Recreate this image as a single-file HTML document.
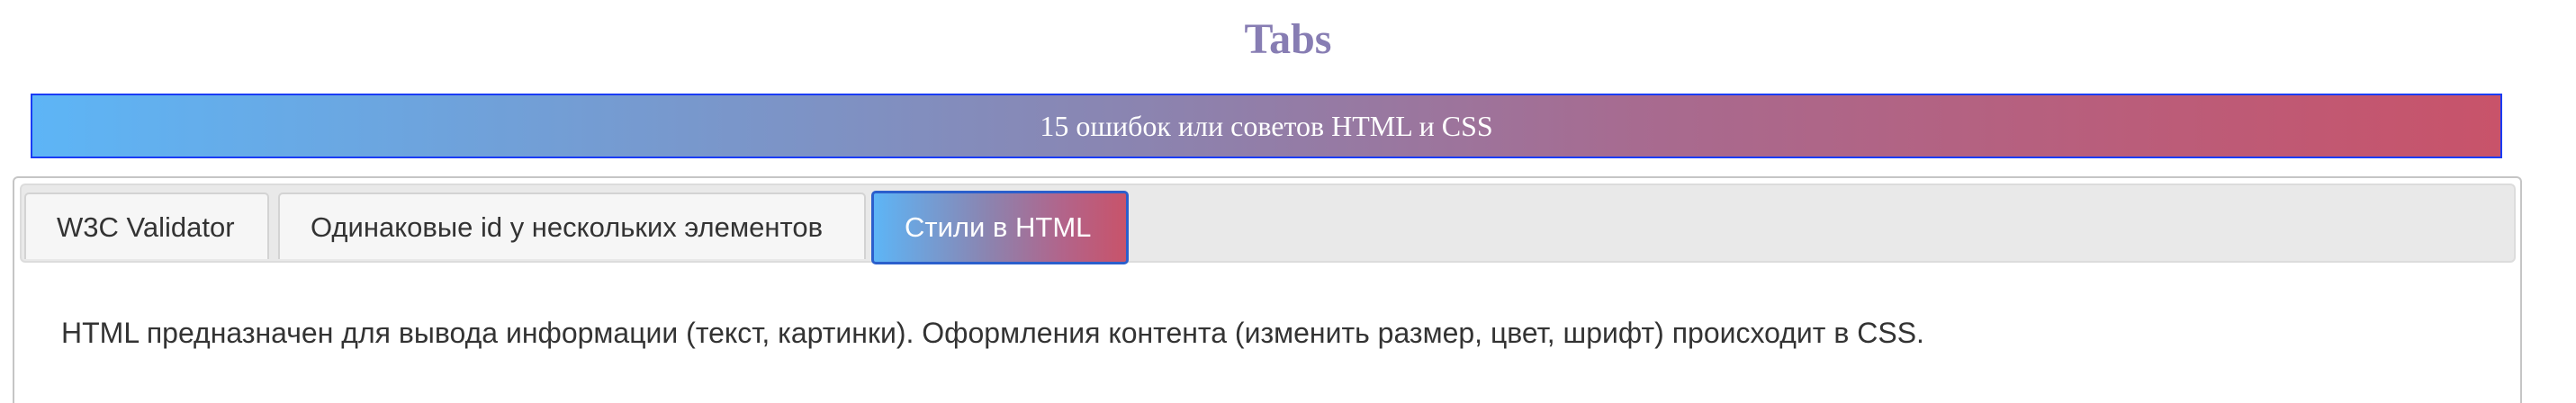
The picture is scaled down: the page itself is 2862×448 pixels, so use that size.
<!DOCTYPE html>
<html><head><meta charset="utf-8"><style>
html,body{margin:0;padding:0;background:#fff;width:2862px;height:448px;overflow:hidden;font-family:"Liberation Sans",sans-serif}
#w{position:relative;width:2862px;height:448px;overflow:hidden}
h1{position:absolute;left:0;width:2862px;top:14px;margin:0;text-align:center;font-family:"Liberation Serif",serif;font-weight:bold;font-size:48px;line-height:60px;color:#877db3}
.banner{position:absolute;left:34px;top:104px;width:2742px;height:68px;border:2px solid #1a3cf5;background:linear-gradient(90deg,#5db5f6,#8b84b0 45%,#a76b90 65%,#c8536a);color:#fff;font-family:"Liberation Serif",serif;font-size:32px;line-height:68px;text-align:center}
.box{position:absolute;left:14px;top:196px;width:2784px;height:250px;border:2px solid #c5c5c5;border-bottom:none;border-radius:6px 6px 0 0}
.bar{position:absolute;left:6px;top:6px;width:2769px;height:84px;background:#e9e9e9;border:2px solid #dcdcdc;border-radius:6px}
.tab{position:absolute;top:8px;height:74px;background:#f6f6f6;border:2px solid #d3d3d3;border-bottom:none;border-radius:5px 5px 0 0;color:#333;font-size:31px;line-height:74px;box-sizing:border-box;padding-left:34px}
.act{top:6px;height:82px;border:3px solid #2b5fcc;border-radius:5px;background:linear-gradient(90deg,#5db5f6,#8b84b0 45%,#b2648a 75%,#c8536a);color:#fff;line-height:76px}
p{position:absolute;left:52px;top:154px;margin:0;font-size:32px;line-height:36px;color:#333;white-space:nowrap}
</style></head><body>
<div id="w">
<h1>Tabs</h1>
<div class="banner">15 ошибок или советов HTML и CSS</div>
<div class="box">
 <div class="bar">
  <div class="tab" style="left:3px;width:272px">W3C Validator</div>
  <div class="tab" style="left:285px;width:653px">Одинаковые id у нескольких элементов</div>
  <div class="tab act" style="left:944px;width:286px">Стили в HTML</div>
 </div>
 <p>HTML предназначен для вывода информации (текст, картинки). Оформления контента (изменить размер, цвет, шрифт) происходит в CSS.</p>
</div>
</div>
</body></html>
